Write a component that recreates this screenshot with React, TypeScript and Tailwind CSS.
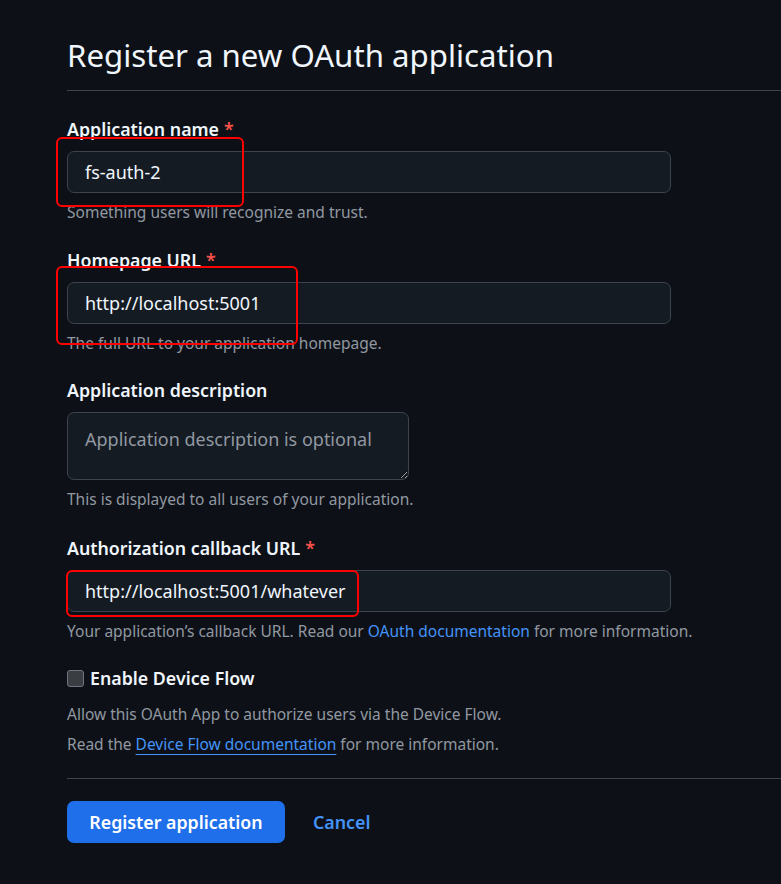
import React from 'react';

const font = { fontFamily: '"Noto Sans", "Open Sans", sans-serif' };

const Label = ({ text, required }: { text: string; required?: boolean }) => (
  <div className="text-[17.8px] leading-[22px] font-semibold text-[#f0f6fc] mb-[11px]">
    {text}
    {required && <span className="text-[#f85149] ml-[5px]">*</span>}
  </div>
);

const Note = ({ children }: { children: React.ReactNode }) => (
  <div className="text-[15.5px] leading-[20px] text-[#9198a1] mt-[9px]">{children}</div>
);

const TextInput = ({ value }: { value: string }) => (
  <input
    readOnly
    value={value}
    className="block w-[604px] h-[42px] px-[17px] rounded-[7px] border border-[#3d444d] bg-[#151b23] text-[18px] text-[#f0f6fc] outline-none"
  />
);

export default function App() {
  return (
    <div className="min-h-screen bg-[#0d1117] overflow-hidden" style={font}>
      <div className="relative pl-[67px] pt-[33px]">
        <div className="border-b border-[#3d444d] pb-[12px] mb-[27px]">
          <h1 className="text-[31.2px] leading-[45px] font-normal text-[#f0f6fc]">Register a new OAuth application</h1>
        </div>

        <div className="mb-[27px]">
          <Label text="Application name" required />
          <TextInput value="fs-auth-2" />
          <Note>Something users will recognize and trust.</Note>
        </div>

        <div className="mb-[26px]">
          <Label text="Homepage URL" required />
          <TextInput value="http://localhost:5001" />
          <Note>The full URL to your application homepage.</Note>
        </div>

        <div className="mb-[28px]">
          <Label text="Application description" />
          <textarea
            readOnly
            placeholder="Application description is optional"
            className="block w-[342px] h-[68px] mt-[1px] px-[17px] py-[13px] rounded-[7px] border border-[#3d444d] bg-[#151b23] text-[18px] leading-[26px] text-[#f0f6fc] placeholder:text-[#9198a1] outline-none resize"
          />
          <Note>This is displayed to all users of your application.</Note>
        </div>

        <div className="mb-[26px]">
          <Label text="Authorization callback URL" required />
          <TextInput value="http://localhost:5001/whatever" />
          <Note>
            Your application’s callback URL. Read our <span className="text-[#4493f8]">OAuth documentation</span> for more information.
          </Note>
        </div>

        <div className="flex items-center gap-[6px] h-[22px]">
          <span className="w-[17px] h-[17px] rounded-[3px] border border-[#6e7681] bg-[#3a3d42]" />
          <span className="text-[17.8px] leading-[22px] font-semibold text-[#f0f6fc]">Enable Device Flow</span>
        </div>
        <div className="text-[15.5px] leading-[30px] text-[#9198a1] mt-[10px]">
          <div>Allow this OAuth App to authorize users via the Device Flow.</div>
          <div>
            Read the <span className="text-[#4493f8] underline underline-offset-[4px]">Device Flow documentation</span> for more information.
          </div>
        </div>

        <div className="border-t border-[#3d444d] mt-[19px] pt-[22px] flex items-center gap-[28px]">
          <button className="h-[42px] w-[218px] rounded-[7px] bg-[#1f6feb] text-white text-[17.8px] font-semibold">
            Register application
          </button>
          <span className="text-[17.8px] font-semibold text-[#4493f8]">Cancel</span>
        </div>

        {/* red annotation boxes */}
        <div className="absolute left-[56px] top-[137px] w-[188px] h-[70px] border-2 border-[#ff0000] rounded-[6px]" />
        <div className="absolute left-[56px] top-[266px] w-[242px] h-[79px] border-2 border-[#ff0000] rounded-[6px]" />
        <div className="absolute left-[66px] top-[570px] w-[293px] h-[47px] border-2 border-[#ff0000] rounded-[6px]" />
      </div>
    </div>
  );
}
